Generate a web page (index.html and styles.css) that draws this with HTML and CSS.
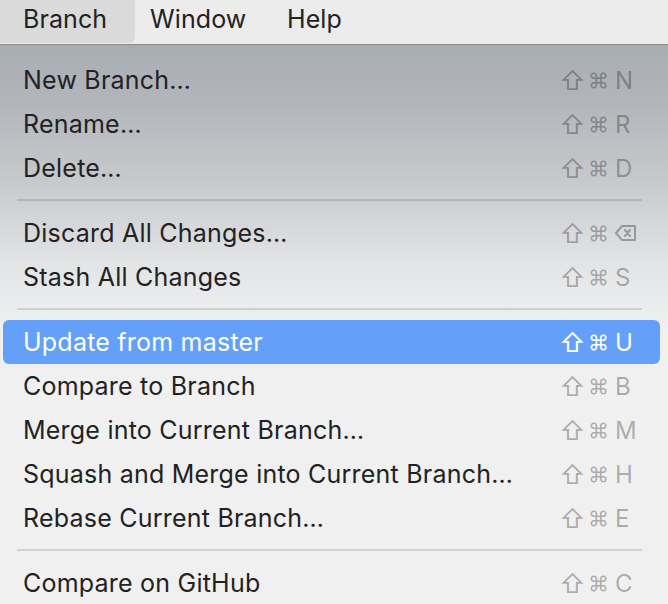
FILE: index.html
```html
<!DOCTYPE html>
<html>
<head>
<meta charset="utf-8">
<link rel="stylesheet" href="styles.css">
</head>
<body>
<div class="menubar">
  <div class="mb-item active">Branch</div>
  <div class="mb-item">Window</div>
  <div class="mb-item">Help</div>
</div>
<div class="menu">
  <div class="row"><span class="label">New Branch…</span><span class="sc"><span class="shift">⇧</span><span class="cmd">⌘</span><span class="key">N</span></span></div>
  <div class="row"><span class="label">Rename…</span><span class="sc"><span class="shift">⇧</span><span class="cmd">⌘</span><span class="key">R</span></span></div>
  <div class="row"><span class="label">Delete…</span><span class="sc"><span class="shift">⇧</span><span class="cmd">⌘</span><span class="key">D</span></span></div>
  <div class="sep"></div>
  <div class="row"><span class="label">Discard All Changes…</span><span class="sc"><span class="shift">⇧</span><span class="cmd">⌘</span><span class="key"><svg class="del" viewBox="0 0 22 18" width="22" height="18"><path d="M7 2 H20 V16 H7 L1 9 Z" fill="none" stroke="currentColor" stroke-width="2" stroke-linejoin="round"/><path d="M10 6 L15 12 M15 6 L10 12" stroke="currentColor" stroke-width="2" stroke-linecap="round"/></svg></span></span></div>
  <div class="row"><span class="label">Stash All Changes</span><span class="sc"><span class="shift">⇧</span><span class="cmd">⌘</span><span class="key">S</span></span></div>
  <div class="sep"></div>
  <div class="row selected"><span class="label">Update from master</span><span class="sc"><span class="shift">⇧</span><span class="cmd">⌘</span><span class="key">U</span></span></div>
  <div class="row"><span class="label">Compare to Branch</span><span class="sc"><span class="shift">⇧</span><span class="cmd">⌘</span><span class="key">B</span></span></div>
  <div class="row"><span class="label">Merge into Current Branch…</span><span class="sc"><span class="shift">⇧</span><span class="cmd">⌘</span><span class="key">M</span></span></div>
  <div class="row"><span class="label">Squash and Merge into Current Branch…</span><span class="sc"><span class="shift">⇧</span><span class="cmd">⌘</span><span class="key">H</span></span></div>
  <div class="row"><span class="label">Rebase Current Branch…</span><span class="sc"><span class="shift">⇧</span><span class="cmd">⌘</span><span class="key">E</span></span></div>
  <div class="sep"></div>
  <div class="row"><span class="label">Compare on GitHub</span><span class="sc"><span class="shift">⇧</span><span class="cmd">⌘</span><span class="key">C</span></span></div>
</div>
</body>
</html>
```
FILE: styles.css
```css
* { box-sizing: border-box; }
html, body { margin: 0; padding: 0; }
body {
  width: 668px;
  height: 604px;
  overflow: hidden;
  font-family: Inter, "Noto Sans", sans-serif;
  background: #f0f0f0;
  color: #222;
}
.menubar {
  height: 45px;
  background: #ececec;
  border-bottom: 1px solid #8c8c8c;
  display: flex;
  align-items: stretch;
  font-size: 25px;
  letter-spacing: 0.1px;
}
.mb-item {
  display: flex;
  align-items: center;
  padding: 0 0 6px 0;
}
.mb-item:nth-child(1) { width: 135px; padding-left: 23px; }
.mb-item:nth-child(2) { padding-left: 15px; width: 152px; }
.mb-item:nth-child(3) { padding-left: 0; }
.mb-item.active {
  background: #dadada;
  border-bottom-right-radius: 6px;
  margin-bottom: 1px;
}
.menu {
  height: 559px;
  background: linear-gradient(180deg, #a8adb4 0px, #b3b6bb 60px, #c8cacd 140px, #e3e4e6 220px, #eff0f0 280px, #f0f0f0 320px);
  padding: 13px 8px 0 3px;
  font-size: 25px;
}
.row {
  height: 44px;
  display: flex;
  align-items: center;
  justify-content: space-between;
  padding: 0 23px 0 20px;
  border-radius: 6px;
  letter-spacing: 0.22px;
}
.row.selected {
  background: #64a0f9;
  color: #fff;
}
.sc {
  display: flex;
  align-items: center;
  color: rgba(0,0,0,0.3);
  font-size: 24px;
  letter-spacing: 0;
}
.row.selected .sc { color: #fff; }
.shift { width: 29px; font-size: 26px; margin-left: -3px; }
.cmd { width: 27px; font-size: 21px; }
.key { width: 22px; display: flex; justify-content: flex-start; }
.del { display: block; }
.sep {
  height: 2px;
  background: rgba(0,0,0,0.12);
  margin: 9px 18px 10px 14px;
}
```
